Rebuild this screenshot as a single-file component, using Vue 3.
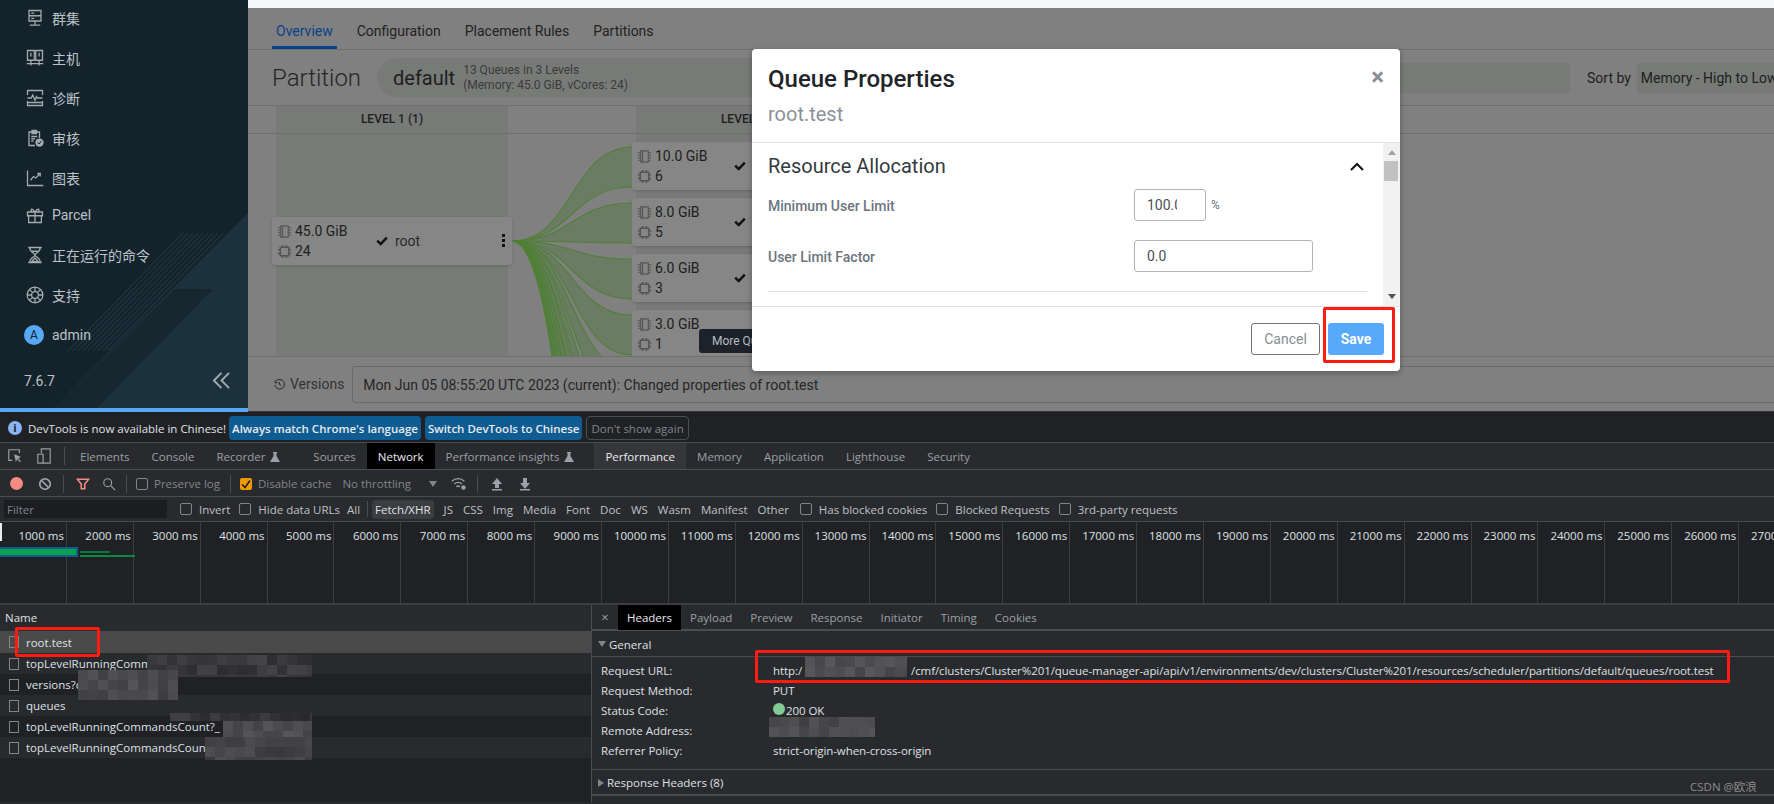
<script setup>
const navItems = [
  { label: '群集', d: 'M4 2h16v7H4zM4 9h16v7H4zM7 5.500h4M7 12.500h4M12 16v5M5 21.500h14' },
  { label: '主机', d: 'M2 2h9v13H2zM13 2h9v13h-9zM6.500 5v5M17.500 5v5M1 19.500h22M6.500 15v7M17.500 15v7' },
  { label: '诊断', d: 'M2 8V2h20v6M2 16v6h20v-6M2 18h20M2 12h5l2-4 3 7 2-5 1 2h7' },
  { label: '审核', d: 'M12 22H4V4h14v8M8 2h6v4H8zM7 10h8M7 13h5M7 16h3', badge: true },
  { label: '图表', d: 'M2 2v20h21M6 15l4-5 3 2 6-6M15 6h4v4' },
  { label: 'Parcel', short: true, d: 'M2 8h20v5H2zM3.500 13h17v9h-17zM12 8v14M12 8C8 2 5 4 8 8M12 8c4-6 7-4 4 0' },
  { label: '正在运行的命令', d: 'M3 2h18M3 22h18M5 2c0 7 7 7 7 10s-7 3-7 10M19 2c0 7-7 7-7 10s7 3 7 10M8 7h8M7.500 21l4.500-5 4.500 5z' },
  { label: '支持', d: 'M12 1.500a10.500 10.500 0 1 0 0 21a10.500 10.500 0 0 0 0-21zM12 7.500a4.500 4.500 0 1 0 0 9a4.500 4.500 0 0 0 0-9zM4.500 4.500l4.300 4.300M19.500 4.500l-4.300 4.300M4.500 19.500l4.300-4.300M19.500 19.500l-4.300-4.300M1.500 12h6M16.500 12h6M12 1.500v6M12 16.500v6' },
]

const mainTabs = ['Overview', 'Configuration', 'Placement Rules', 'Partitions']

const childCards = [
  { mem: '10.0 GiB', cpu: '6' },
  { mem: '8.0 GiB', cpu: '5' },
  { mem: '6.0 GiB', cpu: '3' },
  { mem: '3.0 GiB', cpu: '1' },
]

// sankey-ish links from root to the queues of level 2, most run off the bottom
const linkEnds = [146, 202, 258, 314, 370, 426, 482, 538, 594, 650, 706, 762]
const links = linkEnds.map((y) => {
  const a = y - 133
  const b = a + 40
  const line = (t) => `M4 107C64 107 64 ${t} 124 ${t}`
  return {
    fill: `M4 107C64 107 64 ${a} 124 ${a}L124 ${b}C64 ${b} 64 107 4 107Z`,
    top: line(a),
    bottom: line(b),
  }
})

const devTabs = [
  { label: 'Elements' },
  { label: 'Console' },
  { label: 'Recorder', flask: true },
  { label: 'Sources' },
  { label: 'Network', active: true },
  { label: 'Performance insights', flask: true },
  { label: 'Performance', hover: true },
  { label: 'Memory' },
  { label: 'Application' },
  { label: 'Lighthouse' },
  { label: 'Security' },
]

const typeFilters = ['JS', 'CSS', 'Img', 'Media', 'Font', 'Doc', 'WS', 'Wasm', 'Manifest', 'Other']

const ticks = Array.from({ length: 27 }, (_, i) => `${(i + 1) * 1000} ms`)

const requests = [
  { name: 'root.test', selected: true },
  { name: 'topLevelRunningComm' },
  { name: 'versions?c' },
  { name: 'queues' },
  { name: 'topLevelRunningCommandsCount?_' },
  { name: 'topLevelRunningCommandsCount' },
]

const detailTabs = ['Payload', 'Preview', 'Response', 'Initiator', 'Timing', 'Cookies']

const generalRows = [
  { key: 'Request URL:', prefix: 'http:/', value: '/cmf/clusters/Cluster%201/queue-manager-api/api/v1/environments/dev/clusters/Cluster%201/resources/scheduler/partitions/default/queues/root.test' },
  { key: 'Request Method:', value: 'PUT' },
  { key: 'Status Code:', value: '200 OK', status: true },
  { key: 'Remote Address:', value: '' },
  { key: 'Referrer Policy:', value: 'strict-origin-when-cross-origin' },
]

// the pixelated patches which hide hosts in the screenshot
function mosaic(x, y, w, h, tone) {
  const size = 10
  const cells = []
  for (let r = 0; r < Math.ceil(h / size); r++) {
    for (let c = 0; c < Math.ceil(w / size); c++) {
      const n = Math.abs(Math.sin((x + c) * 12.9 + (y + r) * 78.2)) * 100
      const shade = tone + Math.round((n % 1) * 22)
      cells.push({
        left: `${x + c * size}px`,
        top: `${y + r * size}px`,
        width: `${Math.min(size, w - c * size)}px`,
        height: `${Math.min(size, h - r * size)}px`,
        background: `rgb(${shade},${shade},${shade + 2})`,
      })
    }
  }
  return cells
}

const patches = [
  ...mosaic(147, 243, 165, 22, 46),
  ...mosaic(78, 258, 100, 30, 62),
  ...mosaic(170, 301, 142, 8, 42),
  ...mosaic(223, 309, 89, 16, 66),
  ...mosaic(205, 325, 107, 23, 56),
  ...mosaic(805, 245, 102, 20, 68),
  ...mosaic(769, 305, 106, 20, 64),
]
</script>

<template>
  <div class="screen">
    <section class="app">
      <aside class="sidebar">
        <svg class="side-art" viewBox="0 0 248 408" width="248" height="408">
          <polygon points="248,213 53,408 248,408" fill="#1b323d" />
          <polygon points="53,408 97,408 213,289 175,289" fill="#17262f" />
          <g stroke="#1e3540" stroke-width="1.2">
            <line v-for="n in 9" :key="n" :x1="178 + n * 5" y1="233" :x2="63 + n * 5" y2="351" />
          </g>
        </svg>
        <nav class="nav">
          <div v-for="item in navItems" :key="item.label" class="nav-item" :class="{ short: item.short }">
            <svg class="nav-icon" viewBox="0 0 24 24" fill="none" stroke="#a3abb0" stroke-width="1.7">
              <path :d="item.d" />
              <template v-if="item.badge">
                <circle cx="18" cy="18" r="5.500" fill="#a3abb0" stroke="none" />
                <path d="M15.500 18l2 2 3-4" stroke="#14222b" stroke-width="1.300" />
              </template>
            </svg>
            <span>{{ item.label }}</span>
          </div>
          <div class="nav-item">
            <span class="avatar">A</span>
            <span>admin</span>
          </div>
        </nav>
        <div class="side-foot">
          <span>7.6.7</span>
          <svg viewBox="0 0 18 18" width="17" height="17" fill="none" stroke="#a3abb0" stroke-width="2">
            <path d="M9 1L1 9l8 8M17 1L9 9l8 8" />
          </svg>
        </div>
      </aside>

      <main class="main">
        <div class="top-strip"></div>
        <div class="tabs">
          <span v-for="(tab, i) in mainTabs" :key="tab" class="tab" :class="{ active: i === 0 }">{{ tab }}</span>
        </div>
        <div class="partition-row">
          <span class="partition-title">Partition</span>
          <div class="partition-pill">
            <span class="pill-name">default</span>
            <span class="pill-info">13 Queues in 3 Levels<br />(Memory: 45.0 GiB, vCores: 24)</span>
          </div>
          <div class="search-box"></div>
          <span class="sort-label">Sort by</span>
          <div class="sort-select">Memory - High to Low</div>
        </div>
        <div class="level-head">
          <div class="level-cell">LEVEL 1 (1)</div>
          <div class="level-cell second">LEVEL 2 (4)</div>
        </div>
        <div class="tree">
          <div class="tree-col first">
            <div class="card root-card">
              <div class="card-res">
                <div class="res-row">
                  <svg class="chip" viewBox="0 0 16 16" fill="none" stroke="#555" stroke-width="1.2"><path d="M4 2h8v12H4zM1 4h3M1 6.700h3M1 9.300h3M1 12h3M12 4h3M12 6.700h3M12 9.300h3M12 12h3M6 2v12" /></svg>
                  <span>45.0 GiB</span>
                </div>
                <div class="res-row">
                  <svg class="chip" viewBox="0 0 16 16" fill="none" stroke="#555" stroke-width="1.6"><path d="M3.500 3.500h9v9h-9zM6 1v2.500M10 1v2.500M6 12.500V15M10 12.500V15M1 6h2.500M1 10h2.500M12.500 6H15M12.500 10H15" /></svg>
                  <span>24</span>
                </div>
              </div>
              <svg class="check" viewBox="0 0 16 16"><path d="M1.500 8.500l2-2 3 3 6-6.500 2 2-8 8.500z" /></svg>
              <span class="root-name">root</span>
              <span class="kebab"><i></i><i></i><i></i></span>
            </div>
          </div>
          <svg class="links" viewBox="0 0 124 223" width="124" height="223" fill="none">
            <g v-for="(link, i) in links" :key="i">
              <path :d="link.fill" fill="#6b7c65" />
              <path :d="link.top" stroke="#4f8035" stroke-width="1.100" />
              <path :d="link.bottom" stroke="#4f8035" stroke-width="1.100" />
            </g>
          </svg>
          <div class="tree-col second">
            <div v-for="card in childCards" :key="card.mem" class="card child-card">
              <div class="card-res">
                <div class="res-row">
                  <svg class="chip" viewBox="0 0 16 16" fill="none" stroke="#555" stroke-width="1.2"><path d="M4 2h8v12H4zM1 4h3M1 6.700h3M1 9.300h3M1 12h3M12 4h3M12 6.700h3M12 9.300h3M12 12h3M6 2v12" /></svg>
                  <span>{{ card.mem }}</span>
                </div>
                <div class="res-row">
                  <svg class="chip" viewBox="0 0 16 16" fill="none" stroke="#555" stroke-width="1.6"><path d="M3.500 3.500h9v9h-9zM6 1v2.500M10 1v2.500M6 12.500V15M10 12.500V15M1 6h2.500M1 10h2.500M12.500 6H15M12.500 10H15" /></svg>
                  <span>{{ card.cpu }}</span>
                </div>
              </div>
              <svg class="check" viewBox="0 0 16 16"><path d="M1.500 8.500l2-2 3 3 6-6.500 2 2-8 8.500z" /></svg>
            </div>
          </div>
          <div class="more-tip">More Queues</div>
        </div>
        <div class="versions">
          <svg viewBox="0 0 16 16" width="11" height="11" fill="none" stroke="#222" stroke-width="1.4"><path d="M3 3a7 7 0 1 1-1.600 6M1.500 2v3.500H5M8 4.500V8l2.500 1.500" /></svg>
          <span class="versions-label">Versions</span>
          <div class="versions-box">Mon Jun 05 08:55:20 UTC 2023 (current): Changed properties of root.test</div>
        </div>

        <div class="modal">
          <header class="modal-head">
            <h2>Queue Properties</h2>
            <p>root.test</p>
            <span class="modal-close">×</span>
          </header>
          <div class="modal-body">
            <div class="modal-scroll">
              <div class="section-head">
                <h3>Resource Allocation</h3>
                <svg viewBox="0 0 14 9" width="14" height="9" fill="none" stroke="#111" stroke-width="2"><path d="M1 8l6-6 6 6" /></svg>
              </div>
              <div class="form-row">
                <label>Minimum User Limit</label>
                <input class="input small" value="100.0" />
                <span class="unit">%</span>
              </div>
              <div class="form-row">
                <label>User Limit Factor</label>
                <input class="input" value="0.0" />
              </div>
              <hr />
            </div>
            <div class="scrollbar">
              <span class="arrow arrow-up"></span>
              <span class="thumb"></span>
              <span class="arrow arrow-down"></span>
            </div>
          </div>
          <footer class="modal-foot">
            <button class="btn cancel">Cancel</button>
            <button class="btn save">Save</button>
          </footer>
        </div>
      </main>
    </section>

    <section class="devtools">
      <div class="info-bar">
        <span class="info-icon">i</span>
        <span class="info-text">DevTools is now available in Chinese!</span>
        <button class="info-btn primary">Always match Chrome's language</button>
        <button class="info-btn primary">Switch DevTools to Chinese</button>
        <button class="info-btn ghost">Don't show again</button>
      </div>

      <div class="dev-tabs">
        <svg class="tool" viewBox="0 0 18 18" fill="none" stroke="#9aa0a6" stroke-width="1.3"><path d="M14 6V2H2v12h4" /><path d="M8 7l8 3-3.200 1.200L15.500 15l-1 1-3-3.500L10 16z" fill="#9aa0a6" stroke="none" /></svg>
        <svg class="tool" viewBox="0 0 18 18" fill="none" stroke="#9aa0a6" stroke-width="1.3"><path d="M6 6V1h10v16H7M2 7h6v10H2z" /></svg>
        <span class="sep tabs-sep"></span>
        <span v-for="tab in devTabs" :key="tab.label" class="dev-tab" :class="{ active: tab.active, hover: tab.hover, withflask: tab.flask }">
          {{ tab.label }}
          <svg v-if="tab.flask" class="flask" viewBox="0 0 12 12"><path d="M4 1h4v1H7.500v3L11 11H1l3.500-6V2H4z" fill="#9aa0a6" /></svg>
        </span>
      </div>

      <div class="toolbar">
        <span class="record"></span>
        <svg class="tool-sm" viewBox="0 0 16 16" fill="none" stroke="#9aa0a6" stroke-width="2"><circle cx="8" cy="8" r="6" /><path d="M4 4l8 8" /></svg>
        <span class="sep gap-l"></span>
        <svg class="tool-sm funnel" viewBox="0 0 16 16" fill="none" stroke="#f28b82" stroke-width="1.800"><path d="M1.500 2.500h13L10 8v5.500H6V8z" /></svg>
        <svg class="tool-sm search" viewBox="0 0 16 16" fill="none" stroke="#9aa0a6" stroke-width="1.300"><circle cx="6.500" cy="6.500" r="4.500" /><path d="M10 10l5 5" /></svg>
        <span class="sep gap-s"></span>
        <span class="cb"></span>
        <span class="tool-text">Preserve log</span>
        <span class="sep gap-s"></span>
        <span class="cb checked"><svg viewBox="0 0 12 12" fill="none" stroke="#202124" stroke-width="1.600"><path d="M2 6.500l3 3 5-7" /></svg></span>
        <span class="tool-text">Disable cache</span>
        <span class="tool-text throttle">No throttling</span>
        <span class="caret"></span>
        <svg class="tool-sm wifi" viewBox="0 0 18 18" fill="none" stroke="#9aa0a6" stroke-width="1.500"><path d="M1 6c4-4 10-4 14 0M3.500 9c3-2.500 6-2.500 9 0M6 12c1.500-1 3-1 4 0" /><circle cx="14" cy="13" r="2.500" fill="#9aa0a6" stroke="none" /></svg>
        <span class="sep gap-s"></span>
        <svg class="tool-sm har-up" viewBox="0 0 14 14" fill="#9aa0a6"><path d="M7 1l5 6H9v4H5V7H2zM2 12h10v1.500H2z" /></svg>
        <svg class="tool-sm har-down" viewBox="0 0 14 14" fill="#9aa0a6"><path d="M5 1h4v5h3l-5 6-5-6h3zM2 12h10v1.500H2z" /></svg>
      </div>

      <div class="filter-bar">
        <div class="filter-input">Filter</div>
        <span class="cb f1"></span>
        <span class="filter-text">Invert</span>
        <span class="cb f2"></span>
        <span class="filter-text">Hide data URLs</span>
        <span class="filter-text all">All</span>
        <span class="sep f-sep"></span>
        <span class="type-on">Fetch/XHR</span>
        <span v-for="t in typeFilters" :key="t" class="type">{{ t }}</span>
        <span class="cb f3"></span>
        <span class="filter-text">Has blocked cookies</span>
        <span class="cb f2"></span>
        <span class="filter-text">Blocked Requests</span>
        <span class="cb f2"></span>
        <span class="filter-text">3rd-party requests</span>
      </div>

      <div class="overview">
        <div class="ticks">
          <div v-for="t in ticks" :key="t" class="tick">{{ t }}</div>
        </div>
        <span class="mark-start"></span>
        <span class="bar main-bar"></span>
        <span class="bar thin-a"></span>
        <span class="bar thin-b"></span>
      </div>

      <div class="split">
        <div class="req-list">
          <div class="req-head">Name</div>
          <div v-for="req in requests" :key="req.name" class="req-row" :class="{ selected: req.selected }">
            <span class="req-cb"></span>
            <span class="req-name">{{ req.name }}</span>
          </div>
        </div>
        <div class="details">
          <div class="detail-tabs">
            <span class="detail-x">×</span>
            <span class="detail-tab active">Headers</span>
            <span v-for="t in detailTabs" :key="t" class="detail-tab">{{ t }}</span>
          </div>
          <div class="group-title"><span class="tri open"></span>General</div>
          <div class="general">
            <div v-for="row in generalRows" :key="row.key" class="general-row">
              <span class="g-key">{{ row.key }}</span>
              <span class="g-val">
                <span v-if="row.prefix" class="g-prefix">{{ row.prefix }}</span>
                <i v-if="row.status" class="dot"></i>{{ row.value }}
              </span>
            </div>
          </div>
          <div class="group-title last"><span class="tri"></span>Response Headers (8)</div>
        </div>
      </div>

      <div class="mosaics">
        <span v-for="(cell, i) in patches" :key="i" class="cell" :style="cell"></span>
      </div>
      <span class="red-box box-url"></span>
      <span class="red-box box-name"></span>
      <span class="watermark">CSDN @欧浪</span>
    </section>
    <span class="red-box box-save"></span>
  </div>
</template>

<style>
html, body {
  margin: 0;
  background: #202124;
}
</style>

<style scoped>
.screen {
  position: relative;
  width: 1774px;
  height: 804px;
  overflow: hidden;
  display: flex;
  flex-direction: column;
  font-family: Roboto, "Noto Sans CJK SC", sans-serif;
}

.app {
  display: flex;
  height: 412px;
  flex-shrink: 0;
}

.sidebar {
  position: relative;
  width: 248px;
  flex-shrink: 0;
  box-sizing: border-box;
  background: #14222b;
  border-bottom: 4px solid #57a9f7;
  color: #bac3c9;
  font-size: 14px;
  overflow: hidden;
}

.side-art {
  position: absolute;
  left: 0;
  top: 0;
}

.nav {
  position: relative;
  margin-top: -2px;
  padding-left: 26px;
}

.nav-item {
  display: flex;
  align-items: center;
  gap: 8px;
  height: 40px;
}

.nav-item.short {
  margin-top: -3px;
}

.nav-icon {
  width: 18px;
  height: 18px;
}

.avatar {
  width: 20px;
  height: 20px;
  margin-left: -2px;
  margin-right: 0;
  border-radius: 50%;
  background: #57a9f7;
  color: #14222b;
  font-size: 12px;
  line-height: 20px;
  text-align: center;
}

.side-foot {
  position: relative;
  display: flex;
  justify-content: space-between;
  align-items: center;
  padding: 17px 18px 0 24px;
}

.main {
  position: relative;
  flex: 1;
  min-width: 0;
  overflow: hidden;
  background: #808080;
  border-bottom: 1px solid #3a3a3a;
  color: #1d1f20;
}

.top-strip {
  height: 8px;
  background: #f5f6f8;
}

.tabs {
  display: flex;
  gap: 16px;
  height: 41px;
  padding-left: 24px;
  border-bottom: 1px solid #6f6f6f;
  font-size: 14px;
}

.tab {
  padding: 0 4px;
  line-height: 46px;
  height: 41px;
  box-sizing: border-box;
  color: #222;
}

.tab.active {
  color: #0c4187;
  border-bottom: 3px solid #07428f;
}

.partition-row {
  display: flex;
  align-items: center;
  height: 55px;
  padding-left: 24px;
  border-bottom: 1px solid #6f6f6f;
  white-space: nowrap;
}

.partition-row > * {
  flex-shrink: 0;
}

.partition-title {
  width: 105px;
  font-size: 24px;
  font-weight: 300;
  color: #262626;
}

.partition-pill {
  display: flex;
  align-items: center;
  gap: 8px;
  width: 500px;
  height: 39px;
  padding-left: 16px;
  box-sizing: border-box;
  border-radius: 20px;
  background: #787a78;
}

.pill-name {
  font-size: 20px;
}

.pill-info {
  font-size: 12px;
  line-height: 15px;
  color: #3a3a3a;
}

.search-box {
  width: 625px;
  height: 30px;
  margin-left: 68px;
  border-radius: 2px;
  background: #787a78;
}

.sort-label {
  margin-left: 17px;
  font-size: 14px;
}

.sort-select {
  width: 200px;
  height: 30px;
  margin-left: 6px;
  padding-left: 4px;
  background: #787a78;
  font-size: 14px;
  line-height: 30px;
}

.level-head {
  position: relative;
  display: flex;
  height: 27px;
  padding-left: 28px;
  border-bottom: 1px solid #6f6f6f;
  font-size: 12px;
  font-weight: 500;
}

.level-cell {
  width: 232px;
  background: #787a78;
  line-height: 27px;
  text-align: center;
}

.level-cell.second {
  margin-left: 128px;
}

.tree {
  position: relative;
  display: flex;
  height: 222px;
  padding-left: 28px;
  overflow: hidden;
  font-size: 14px;
  border-bottom: 1px solid #6f6f6f;
}

.tree-col {
  width: 232px;
  background: #787a78;
  flex-shrink: 0;
}

.tree-col.second {
  margin-left: 128px;
  padding-top: 8px;
}

.links {
  position: absolute;
  left: 260px;
  top: 0;
}

.card {
  display: flex;
  align-items: center;
  background: #868686;
  border-radius: 3px;
  box-shadow: 0 1px 3px rgba(0, 0, 0, 0.16);
}

.root-card {
  position: relative;
  width: 240px;
  height: 48px;
  margin: 83px 0 0 -4px;
}

.child-card {
  width: 240px;
  height: 48px;
  margin: 0 0 8px -4px;
}

.card-res {
  display: flex;
  flex-direction: column;
  width: 93px;
  padding-left: 5px;
  box-sizing: border-box;
}

.res-row {
  display: flex;
  align-items: center;
  gap: 3px;
  height: 20px;
}

.chip {
  width: 15px;
  height: 15px;
}

.check {
  width: 14px;
  height: 14px;
  margin-left: 10px;
  fill: #111;
}

.child-card .check {
  margin-left: 8px;
}

.root-name {
  margin-left: 6px;
  color: #2a2a2a;
}

.kebab {
  position: absolute;
  right: 7px;
  top: 17px;
  display: flex;
  flex-direction: column;
  gap: 2px;
}

.kebab i {
  width: 3px;
  height: 3px;
  background: #111;
}

.more-tip {
  position: absolute;
  left: 451px;
  top: 195px;
  width: 120px;
  height: 24px;
  padding-left: 13px;
  box-sizing: border-box;
  border-radius: 3px;
  background: #1b2229;
  color: #b9bdc0;
  font-size: 12px;
  line-height: 24px;
}

.versions {
  display: flex;
  align-items: center;
  height: 54px;
  padding-left: 26px;
  font-size: 14px;
  white-space: nowrap;
}

.versions-label {
  margin-left: 5px;
  color: #333;
}

.versions-box {
  flex: 1;
  height: 37px;
  margin: 0 -10px 0 8px;
  padding-left: 10px;
  box-sizing: border-box;
  border: 1px solid #6a6a6a;
  border-radius: 3px;
  line-height: 36px;
  color: #262626;
}

.modal {
  position: absolute;
  left: 504px;
  top: 49px;
  width: 648px;
  height: 322px;
  display: flex;
  flex-direction: column;
  background: #fff;
  border-radius: 4px;
  box-shadow: 0 2px 6px rgba(0, 0, 0, 0.3);
  color: #212529;
}

.modal-head {
  position: relative;
  height: 94px;
  flex-shrink: 0;
  padding: 15px 16px 0;
  box-sizing: border-box;
  border-bottom: 1px solid #dee2e6;
}

.modal-head h2 {
  margin: 0;
  font-size: 24px;
  font-weight: 500;
  line-height: 30px;
}

.modal-head p {
  margin: 7px 0 0;
  font-size: 20px;
  line-height: 26px;
  color: #8b9197;
}

.modal-close {
  position: absolute;
  right: 16px;
  top: 14px;
  font-size: 24px;
  font-weight: 700;
  color: #8a8f94;
}

.modal-body {
  display: flex;
  height: 164px;
  flex-shrink: 0;
  border-bottom: 1px solid #dee2e6;
  box-sizing: border-box;
  overflow: hidden;
}

.modal-scroll {
  flex: 1;
  padding: 0 16px;
}

.section-head {
  display: flex;
  align-items: center;
  justify-content: space-between;
  height: 46px;
  padding-right: 3px;
}

.section-head h3 {
  margin: 0;
  font-size: 20px;
  font-weight: 400;
  color: #343a40;
}

.form-row {
  display: flex;
  align-items: center;
  height: 32px;
  margin-bottom: 19px;
  font-size: 14px;
}

.form-row label {
  width: 366px;
  padding-top: 2px;
  font-weight: 500;
  color: #6c757d;
}

.input {
  width: 179px;
  height: 32px;
  padding: 0 12px;
  box-sizing: border-box;
  border: 1px solid #adb5bd;
  border-radius: 3px;
  background: #fff;
  font: 14px Roboto, sans-serif;
  color: #495057;
}

.input.small {
  width: 72px;
  padding-right: 28px;
}

.unit {
  margin-left: 5px;
  font-size: 12px;
  color: #6c757d;
}

.modal-scroll hr {
  margin: 0;
  border: 0;
  border-top: 1px solid #dee2e6;
}

.scrollbar {
  position: relative;
  width: 17px;
  flex-shrink: 0;
  background: #f1f1f1;
}

.arrow {
  position: absolute;
  left: 5px;
  border-left: 4px solid transparent;
  border-right: 4px solid transparent;
}

.arrow-up {
  top: 7px;
  border-bottom: 5px solid #a3a3a3;
}

.arrow-down {
  bottom: 7px;
  border-top: 5px solid #505050;
}

.thumb {
  position: absolute;
  left: 1px;
  top: 18px;
  width: 14px;
  height: 20px;
  background: #c1c1c1;
}

.modal-foot {
  display: flex;
  justify-content: flex-end;
  gap: 8px;
  padding: 16px 16px 0 0;
}

.btn {
  height: 32px;
  border-radius: 3px;
  font: 14px Roboto, sans-serif;
}

.cancel {
  width: 69px;
  border: 1px solid #6c757d;
  background: #fff;
  color: #868e96;
}

.save {
  width: 56px;
  border: 0;
  background: #57a9fb;
  color: #fff;
  font-weight: 700;
}

.devtools {
  position: relative;
  flex: 1;
  background: #292a2d;
  color: #bdc1c6;
  font-family: "Open Sans", "Noto Sans CJK SC", sans-serif;
  font-size: 11.5px;
  white-space: nowrap;
}

.info-bar {
  display: flex;
  align-items: center;
  gap: 4px;
  height: 31px;
  padding-left: 8px;
  box-sizing: border-box;
  border-top: 2px solid #202124;
  border-bottom: 1px solid #494c50;
  background: #202124;
}

.info-icon {
  width: 14px;
  height: 14px;
  border-radius: 50%;
  background: #8ab4f8;
  color: #202124;
  font-size: 11px;
  font-weight: 700;
  line-height: 14px;
  text-align: center;
}

.info-text {
  margin: 0 -1px 0 2px;
  color: #e0e2e4;
}

.info-btn {
  height: 24px;
  padding: 0 3px;
  border-radius: 4px;
  font: 600 11.5px "Open Sans", sans-serif;
}

.info-btn.primary {
  border: 0;
  background: #0f5c93;
  color: #e8eaed;
}

.info-btn.ghost {
  border: 1px solid #494c50;
  background: transparent;
  color: #80868b;
  font-weight: 400;
  padding: 0 4px;
}

.dev-tabs {
  display: flex;
  align-items: center;
  height: 27px;
  border-bottom: 1px solid #494c50;
  box-sizing: border-box;
}

.tool {
  width: 16px;
  height: 18px;
  margin-left: 7px;
  margin-right: 6px;
}

.sep {
  width: 1px;
  height: 18px;
  margin: 0 6px;
  background: #494c50;
}

.tabs-sep {
  margin-right: 4px;
}

.dev-tab {
  display: flex;
  align-items: center;
  gap: 4px;
  height: 26px;
  padding: 1px 11px 0;
  box-sizing: border-box;
  color: #9aa0a6;
}

.dev-tab.withflask {
  padding-right: 21px;
}

.dev-tab.active {
  background: #000;
  color: #e8eaed;
}

.dev-tab.hover {
  margin-left: -2px;
  background: #35363a;
  color: #e8eaed;
}

.flask {
  width: 12px;
  height: 12px;
}

.toolbar {
  display: flex;
  align-items: center;
  height: 27px;
  padding-top: 1px;
  border-bottom: 1px solid #494c50;
  box-sizing: border-box;
  color: #80868b;
}

.record {
  width: 13px;
  height: 13px;
  margin-left: 10px;
  border-radius: 50%;
  background: #f28b82;
}

.tool-sm {
  width: 14px;
  height: 14px;
  margin-left: 15px;
}

.sep.gap-l {
  margin: 0 0 0 11px;
}

.funnel {
  margin-left: 12px;
}

.search {
  margin-left: 12px;
}

.sep.gap-s {
  margin: 0 9px 0 10px;
}

.cb {
  display: inline-flex;
  width: 12px;
  height: 12px;
  flex-shrink: 0;
  box-sizing: border-box;
  border: 1px solid #80868b;
  border-radius: 2px;
}

.cb.checked {
  border: 0;
  background: #f29900;
}

.tool-text {
  margin-left: 6px;
}

.throttle {
  margin-left: 11px;
}

.caret {
  width: 0;
  height: 0;
  margin-left: 18px;
  border-left: 4px solid transparent;
  border-right: 4px solid transparent;
  border-top: 6px solid #80868b;
}

.wifi {
  width: 16px;
  height: 16px;
  margin-left: 14px;
}

.har-up {
  margin-left: 3px;
}

.har-down {
  margin-left: 14px;
}

.filter-bar {
  display: flex;
  align-items: center;
  height: 25px;
  border-bottom: 1px solid #494c50;
  box-sizing: border-box;
}

.filter-input {
  width: 163px;
  height: 18px;
  margin-left: 4px;
  padding-left: 3px;
  box-sizing: border-box;
  background: #1c1d20;
  color: #80868b;
  line-height: 19px;
}

.cb.f1 {
  margin-left: 13px;
}

.cb.f2 {
  margin-left: 9px;
}

.cb.f3 {
  margin-left: 11px;
}

.filter-text {
  margin-left: 7px;
}

.sep.f-sep {
  height: 16px;
  margin: 0 4px 0 7px;
}

.type-on {
  padding: 2px 3px;
  border-radius: 4px;
  background: #3c3d41;
  color: #dfe1e5;
}

.type {
  margin-left: 10px;
}

.overview {
  position: relative;
  height: 81px;
  background: #202124;
  border-bottom: 2px solid #3c3d40;
  overflow: hidden;
}

.ticks {
  display: grid;
  grid-template-columns: repeat(27, 66.9px);
  height: 100%;
}

.tick {
  padding: 6px 2px 0 0;
  text-align: right;
  border-right: 1px solid #3c3d40;
  color: #dfe1e5;
}

.mark-start {
  position: absolute;
  left: 0;
  top: 1px;
  width: 2px;
  height: 18px;
  background: #e8eaed;
}

.bar {
  position: absolute;
  left: 0;
  background: #0ba24f;
}

.main-bar {
  top: 25px;
  width: 76px;
  height: 6px;
  border: 2px solid #0d5f92;
  border-left: 0;
}

.thin-a {
  left: 80px;
  top: 29px;
  width: 30px;
  height: 2px;
  background: #0b7a3d;
}

.thin-b {
  left: 80px;
  top: 33px;
  width: 55px;
  height: 2px;
  background: #0b8a45;
}

.split {
  display: flex;
  height: 197px;
}

.req-list {
  width: 592px;
  flex-shrink: 0;
  background: #202124;
  border-right: 1px solid #494c50;
  box-sizing: border-box;
}

.req-head {
  height: 26px;
  padding-left: 5px;
  background: #292a2d;
  line-height: 26px;
  color: #dfe1e5;
}

.req-row {
  display: flex;
  align-items: center;
  height: 21px;
  padding-left: 9px;
  color: #dfe1e5;
}

.req-row:nth-child(even) {
  background: #202124;
}

.req-row:nth-child(odd) {
  background: #292a2d;
}

.req-row.selected {
  height: 22px;
  background: #4a4a4a;
}

.req-cb {
  width: 10px;
  height: 12px;
  border: 1px solid #80868b;
  box-sizing: border-box;
}

.req-name {
  margin-left: 7px;
}

.details {
  flex: 1;
  min-width: 0;
  background: #292a2d;
}

.detail-tabs {
  display: flex;
  align-items: center;
  height: 26px;
  box-sizing: border-box;
  border-bottom: 2px solid #494c50;
  color: #9aa0a6;
}

.detail-x {
  width: 26px;
  text-align: center;
  font-size: 13px;
}

.detail-tab {
  height: 26px;
  padding: 1px 9px 0;
  box-sizing: border-box;
  line-height: 26px;
}

.detail-tab.active {
  background: #000;
  color: #e8eaed;
}

.group-title {
  display: flex;
  align-items: center;
  gap: 3px;
  height: 26px;
  padding: 1px 0 0 6px;
  border-bottom: 1px solid #494c50;
  box-sizing: border-box;
  color: #dfe1e5;
}

.group-title.last {
  border-bottom: 2px solid #494c50;
}

.tri {
  width: 0;
  height: 0;
  border-top: 4px solid transparent;
  border-bottom: 4px solid transparent;
  border-left: 6px solid #80868b;
}

.tri.open {
  border-left: 4px solid transparent;
  border-right: 4px solid transparent;
  border-bottom: 0;
  border-top: 6px solid #80868b;
}

.general {
  height: 113px;
  padding-top: 4px;
  box-sizing: border-box;
  border-bottom: 1px solid #494c50;
}

.general-row {
  display: flex;
  height: 20px;
  padding-left: 9px;
  line-height: 20px;
  color: #dfe1e5;
}

.g-key {
  width: 172px;
  flex-shrink: 0;
}

.g-val {
  display: flex;
  align-items: center;
  letter-spacing: -0.075px;
}

.g-prefix {
  width: 138px;
}

.dot {
  width: 12px;
  height: 12px;
  margin-right: 1px;
  margin-top: -5px;
  border-radius: 50%;
  background: #81c995;
}

.mosaics {
  position: absolute;
  left: 0;
  top: 0;
}

.cell {
  position: absolute;
}

.red-box {
  position: absolute;
  box-sizing: border-box;
  border: 3px solid #ff1a12;
  border-radius: 2px;
}

.box-url {
  left: 755px;
  top: 238px;
  width: 975px;
  height: 33px;
}

.box-name {
  left: 15px;
  top: 215px;
  width: 85px;
  height: 30px;
}

.box-save {
  left: 1323px;
  top: 307px;
  width: 72px;
  height: 56px;
}

.watermark {
  position: absolute;
  left: 1690px;
  top: 366px;
  font-size: 11.5px;
  color: #8c8c8c;
}
</style>
